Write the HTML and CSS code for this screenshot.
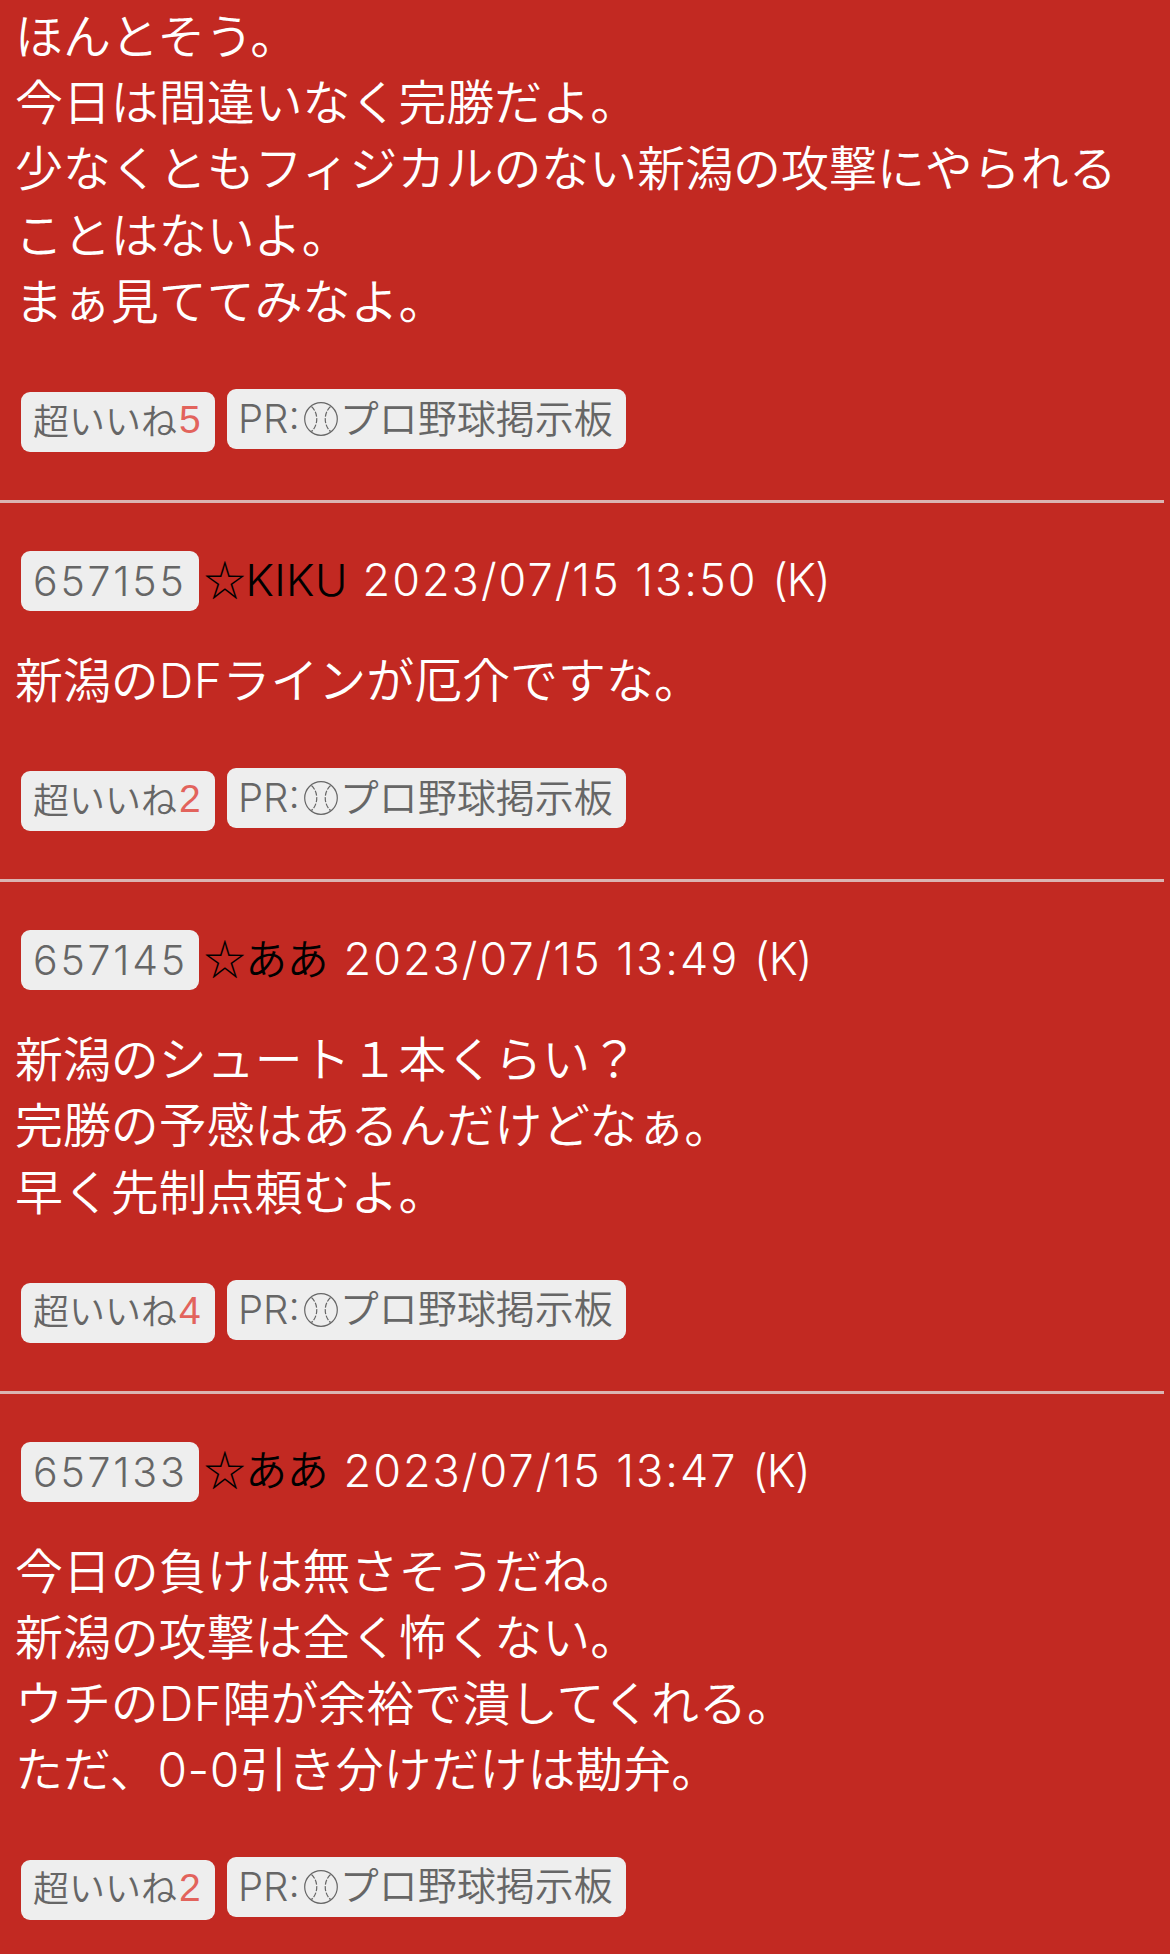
FILE: index.html
```
<!DOCTYPE html>
<html lang="ja">

<head>
    <meta charset="UTF-8">
    <meta name="viewport" content="width=device-width, initial-scale=1.0">
    <title>掲示板</title>
    <link rel="stylesheet" href="styles.css">
</head>

<body>

    <!-- ボールのアイコン -->
    <svg class="defs" width="0" height="0">
        <symbol id="ball" viewBox="0 0 34 34">
            <circle cx="17" cy="17" r="16.3" />
            <path d="M7.5 4.5 C14.5 11 14.5 23 7.5 29.5" stroke-dasharray="5 1.5" />
            <path d="M26.5 4.5 C19.5 11 19.5 23 26.5 29.5" stroke-dasharray="5 1.5" />
        </symbol>
    </svg>

    <div class="post first">
        <p class="text">ほんとそう。<br>今日は間違いなく完勝だよ。<br>少なくともフィジカルのない新潟の攻撃にやられることはないよ。<br>まぁ見ててみなよ。</p>
        <div class="buttons">
            <a class="btn like"><span class="label">超いいね</span><span class="count">5</span></a>
            <a class="btn pr"><span class="en">PR:</span><svg class="ball"><use href="#ball" /></svg><span class="label">プロ野球掲示板</span></a>
        </div>
    </div>

    <div class="post">
        <div class="head">
            <a class="btn number">657155</a>
            <span class="star">☆</span><span class="name en">KIKU</span>
            <span class="date">2023/07/15 13:50 <span class="device">(K)</span></span>
        </div>
        <p class="text">新潟の<span class="en">DF</span>ラインが厄介ですな。</p>
        <div class="buttons">
            <a class="btn like"><span class="label">超いいね</span><span class="count">2</span></a>
            <a class="btn pr"><span class="en">PR:</span><svg class="ball"><use href="#ball" /></svg><span class="label">プロ野球掲示板</span></a>
        </div>
    </div>

    <div class="post">
        <div class="head">
            <a class="btn number">657145</a>
            <span class="star">☆</span><span class="name">ああ</span>
            <span class="date">2023/07/15 13:49 <span class="device">(K)</span></span>
        </div>
        <p class="text">新潟のシュート１本くらい？<br>完勝の予感はあるんだけどなぁ。<br>早く先制点頼むよ。</p>
        <div class="buttons">
            <a class="btn like"><span class="label">超いいね</span><span class="count">4</span></a>
            <a class="btn pr"><span class="en">PR:</span><svg class="ball"><use href="#ball" /></svg><span class="label">プロ野球掲示板</span></a>
        </div>
    </div>

    <div class="post">
        <div class="head">
            <a class="btn number">657133</a>
            <span class="star">☆</span><span class="name">ああ</span>
            <span class="date">2023/07/15 13:47 <span class="device">(K)</span></span>
        </div>
        <p class="text">今日の負けは無さそうだね。<br>新潟の攻撃は全く怖くない。<br>ウチの<span class="en">DF</span>陣が余裕で潰してくれる。<br>ただ、<span class="en">0-0</span>引き分けだけは勘弁。</p>
        <div class="buttons">
            <a class="btn like"><span class="label">超いいね</span><span class="count">2</span></a>
            <a class="btn pr"><span class="en">PR:</span><svg class="ball"><use href="#ball" /></svg><span class="label">プロ野球掲示板</span></a>
        </div>
    </div>

</body>

</html>
```

FILE: styles.css
```
body {
    margin: 0;
    background-color: #c22922;
    color: #fff;
    font-family: "Noto Sans CJK JP", sans-serif;
    font-weight: 350;
}

.defs {
    display: block;
}

.post {
    width: 1164px;
    box-sizing: border-box;
    padding: 48px 0 51px;
    border-bottom: 3px solid #dbb4b2;
}

.post.first {
    padding-top: 0;
}

.post:last-child {
    border-bottom: none;
    padding-bottom: 30px;
}

.en {
    font-family: Inter, sans-serif;
    line-height: 1;
}

.head {
    display: flex;
    align-items: center;
    height: 60px;
    padding-left: 21px;
    margin-bottom: 33px;
    font-size: 41.5px;
    white-space: nowrap;
}

.text {
    margin: 0;
    padding: 0 15px;
    font-size: 47.95px;
    line-height: 66.2px;
}

.text .en {
    letter-spacing: 0.5px;
}

.buttons {
    display: flex;
    align-items: flex-start;
    height: 60px;
    padding-left: 21px;
    margin-top: 58px;
}

.post:last-child .buttons {
    margin-top: 57px;
}

.btn {
    display: flex;
    align-items: center;
    box-sizing: border-box;
    height: 60px;
    border-radius: 9px;
    background-color: #eee;
    color: #666;
    white-space: nowrap;
}

.label {
    line-height: 60px;
    padding-bottom: 7px;
}

.number {
    width: 178px;
    padding-left: 12px;
    font-family: Inter, sans-serif;
    font-size: 41px;
    letter-spacing: 2.8px;
}

.star {
    margin-left: 5px;
    padding-bottom: 7px;
    color: #000;
}

.name {
    padding-bottom: 7px;
    color: #000;
}

.name.en {
    padding-bottom: 2px;
    font-size: 44px;
    letter-spacing: 0.3px;
}

.date {
    margin-left: 15px;
    padding-bottom: 3px;
    font-family: Inter, sans-serif;
    font-size: 45px;
    letter-spacing: 2px;
}

.device {
    letter-spacing: -1px;
}

.like {
    width: 194px;
    margin: 3px 12px 0 0;
    padding-left: 12px;
    font-size: 36px;
}

.count {
    padding: 0 0 4px 2px;
    font-family: "Liberation Sans", sans-serif;
    font-size: 39px;
    color: #e2635c;
}

.pr {
    width: 399px;
    padding-left: 11px;
    font-size: 39px;
}

.pr .en {
    font-size: 40px;
}

.ball {
    width: 34px;
    height: 34px;
    margin: 0 2px 0 4px;
    fill: none;
    stroke: #666;
    stroke-width: 1.2;
}
```
